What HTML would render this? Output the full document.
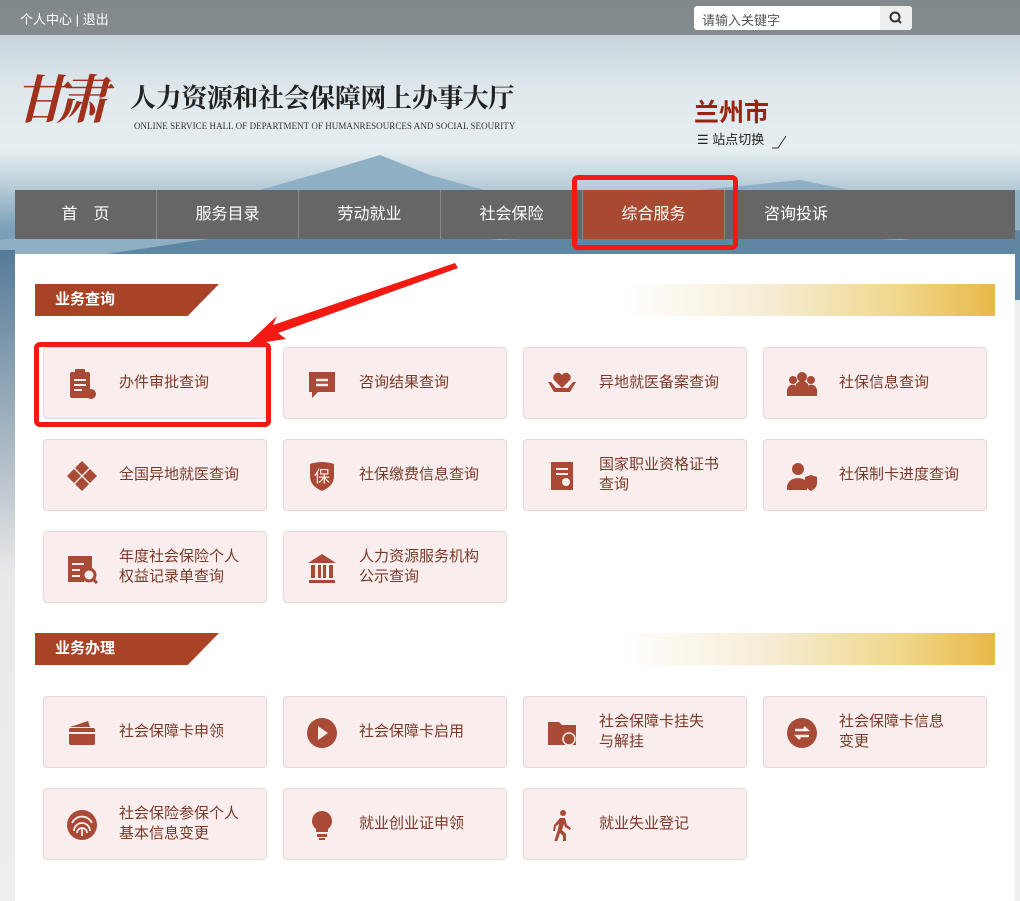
<!DOCTYPE html>
<html><head><meta charset="utf-8"><style>
*{margin:0;padding:0;box-sizing:border-box}
body{width:1020px;height:901px;overflow:hidden;position:relative;font-family:"Liberation Sans","Noto Sans CJK SC",sans-serif;background:#eee}
.hdr{position:absolute;left:0;top:0;width:1020px;height:300px;background:linear-gradient(180deg,#b9c9d2 0%,#dfe8ec 30%,#e6eef1 50%,#b8cdd8 62%,#7fa3bb 75%,#5f89a6 100%)}
.mtn{position:absolute;left:0;top:130px;width:1020px;height:170px}
.top{position:absolute;left:0;top:0;width:1020px;height:35px;background:rgba(110,115,118,.75)}
.top span{position:absolute;left:20px;top:9px;color:#fff;font-size:13px}
.search{position:absolute;left:694px;top:6px;width:218px;height:24px;background:#fff;border-radius:3px}
.search span{position:absolute;left:8px;top:4px;font-size:13px;color:#555}
.search i{position:absolute;right:0;top:0;width:32px;height:24px;background:#eee;border-radius:0 3px 3px 0}
.logo{position:absolute;left:14px;top:58px;font-family:"Noto Serif CJK SC",serif;font-size:52px;color:#a0311d;font-style:italic;font-weight:bold;letter-spacing:-10px}
.title{position:absolute;left:130px;top:78px;font-family:"Noto Serif CJK SC",serif;font-size:26px;color:#222;font-weight:bold;letter-spacing:-0.4px}
.sub{position:absolute;left:134px;top:121px;font-family:"Liberation Serif",serif;font-size:9px;color:#333;letter-spacing:.05px}
.city{position:absolute;left:694px;top:93px;font-size:25px;font-weight:bold;color:#9a2413}
.sw{position:absolute;left:697px;top:129px;font-size:13px;color:#222}
.nav{position:absolute;left:15px;top:190px;width:1000px;height:49px;background:#666;display:flex}
.nav div{width:142px;height:49px;line-height:49px;text-align:center;color:#fff;font-size:16px;border-right:1px solid #888}
.nav div.a{background:#a84a31}
.nav div.n{border:none}
.panel{position:absolute;left:15px;top:254px;width:1000px;height:647px;background:#fff}
.city-img{position:absolute;left:0;top:250px;width:15px;height:651px;background:linear-gradient(180deg,#557a98,#aab8c4 30%,#e9e9e9 50%,#eee)}
.sec{position:absolute;left:35px;height:32px;width:184px;background:#a84326;clip-path:polygon(0 0,100% 0,83% 100%,0 100%);color:#fff;font-weight:bold;font-size:15px;line-height:32px;padding-left:20px}
.gold{position:absolute;left:620px;width:375px;height:32px;background:linear-gradient(90deg,#fff 0%,#f6ecd4 40%,#f0d78a 75%,#e7b84a 100%)}
.card{position:absolute;width:224px;height:72px;background:#f9eeed;border:1px solid #e6d6d4;border-radius:4px;color:#7a3a2a;font-size:15px;line-height:20px}
.card .ic{position:absolute;left:22px;top:20px;width:32px;height:32px}
.card .t{position:absolute;left:75px;top:50%;transform:translateY(-50%);white-space:nowrap}
.ic{fill:#a84a35}
.rb{position:absolute;border:5px solid #f21a12;border-radius:6px}
</style></head><body>
<div class="hdr">
<svg class="mtn" viewBox="0 0 1020 170" preserveAspectRatio="none"><path d="M0 110 L150 90 L260 60 L330 40 L380 25 L430 45 L520 70 L620 80 L700 60 L800 50 L900 70 L1020 60 L1020 170 L0 170Z" fill="#8fb0c4"/><path d="M0 140 L200 110 L350 95 L500 110 L700 100 L900 110 L1020 100 L1020 170 L0 170Z" fill="#5d87a3"/></svg>
</div>
<div class="top"><span>个人中心 | 退出</span>
<div class="search"><span>请输入关键字</span><i><svg width="32" height="24"><circle cx="15" cy="11" r="4.5" fill="none" stroke="#333" stroke-width="2"/><path d="M18 14l3 3" stroke="#333" stroke-width="2"/></svg></i></div></div>
<div class="logo">甘肃</div>
<div class="title">人力资源和社会保障网上办事大厅</div>
<div class="sub">ONLINE SERVICE HALL OF DEPARTMENT OF HUMANRESOURCES AND SOCIAL SEOURITY</div>
<div class="city">兰州市</div>
<div class="sw">☰ 站点切换 <svg width="20" height="16" style="vertical-align:middle"><path d="M4 15h6l8-12" stroke="#333" fill="none"/></svg></div>
<div class="nav"><div>首　页</div><div>服务目录</div><div>劳动就业</div><div>社会保险</div><div class="a">综合服务</div><div class="n">咨询投诉</div></div>
<div class="city-img"></div>
<div class="panel"></div>
<div class="gold" style="top:284px"></div><div class="sec" style="top:284px">业务查询</div>
<div class="gold" style="top:633px"></div><div class="sec" style="top:633px">业务办理</div>

<div class="card" style="left:43px;top:347px"><svg class="ic" viewBox="0 0 32 32"><rect x="4" y="4" width="20" height="26" rx="2"/><rect x="9" y="1" width="10" height="5" rx="1"/><path d="M8 12h12M8 17h12M8 22h8" stroke="#f9eeed" stroke-width="2"/><circle cx="25" cy="26" r="5"/></svg><div class="t">办件审批查询</div></div>
<div class="card" style="left:283px;top:347px"><svg class="ic" viewBox="0 0 32 32"><path d="M3 4h26v20H12l-6 6v-6H3z"/><path d="M10 12h12M10 17h12" stroke="#f9eeed" stroke-width="2.5"/></svg><div class="t">咨询结果查询</div></div>
<div class="card" style="left:523px;top:347px"><svg class="ic" viewBox="0 0 32 32"><path d="M16 20 L8 12 A4 4 0 0 1 16 7 A4 4 0 0 1 24 12Z"/><path d="M2 14l6 10h16l6-10-3 0-5 6H10l-5-6z"/></svg><div class="t">异地就医备案查询</div></div>
<div class="card" style="left:763px;top:347px"><svg class="ic" viewBox="0 0 32 32"><circle cx="16" cy="9" r="5"/><circle cx="7" cy="12" r="4"/><circle cx="25" cy="12" r="4"/><path d="M9 28v-8a7 7 0 0 1 14 0v8zM1 28v-6a6 6 0 0 1 8-5v11zM31 28v-6a6 6 0 0 0-8-5v11z"/></svg><div class="t">社保信息查询</div></div>

<div class="card" style="left:43px;top:439px"><svg class="ic" viewBox="0 0 32 32"><path d="M16 1l7 7-7 7-7-7zM16 17l7 7-7 7-7-7zM1 16l7-7 7 7-7 7zM17 16l7-7 7 7-7 7z"/></svg><div class="t">全国异地就医查询</div></div>
<div class="card" style="left:283px;top:439px"><svg class="ic" viewBox="0 0 32 32"><path d="M4 4q12-4 24 0v12q0 10-12 15Q4 26 4 16z"/><text x="16" y="22" font-size="16" fill="#f9eeed" text-anchor="middle" font-family="Noto Sans CJK SC">保</text></svg><div class="t">社保缴费信息查询</div></div>
<div class="card" style="left:523px;top:439px"><svg class="ic" viewBox="0 0 32 32"><path d="M5 2h22v28H5z"/><path d="M10 9h12M10 14h12" stroke="#f9eeed" stroke-width="2"/><circle cx="20" cy="22" r="4" fill="#f9eeed"/></svg><div class="t">国家职业资格证书<br>查询</div></div>
<div class="card" style="left:763px;top:439px"><svg class="ic" viewBox="0 0 32 32"><circle cx="12" cy="9" r="6"/><path d="M1 30v-4a11 9 0 0 1 20-4v8z"/><path d="M19 17l6-2 6 2v6q0 5-6 8-6-3-6-8z"/></svg><div class="t">社保制卡进度查询</div></div>

<div class="card" style="left:43px;top:531px"><svg class="ic" viewBox="0 0 32 32"><path d="M2 4h24v14h-8v12H2z"/><path d="M6 12h12M6 18h8M6 24h8" stroke="#f9eeed" stroke-width="2"/><circle cx="23" cy="23" r="6" fill="none" stroke="#a84a35" stroke-width="3"/><path d="M27 27l4 4" stroke="#a84a35" stroke-width="3"/></svg><div class="t">年度社会保险个人<br>权益记录单查询</div></div>
<div class="card" style="left:283px;top:531px"><svg class="ic" viewBox="0 0 32 32"><path d="M16 2L2 11h28z M3 28h26v3H3z M5 13h4v13H5zM12 13h3v13h-3zM17 13h3v13h-3zM23 13h4v13h-4z"/></svg><div class="t">人力资源服务机构<br>公示查询</div></div>

<div class="card" style="left:43px;top:696px"><svg class="ic" viewBox="0 0 32 32"><path d="M4 10l18-6 2 6z"/><rect x="3" y="11" width="26" height="17" rx="2"/><path d="M3 16h26" stroke="#f9eeed" stroke-width="2"/></svg><div class="t">社会保障卡申领</div></div>
<div class="card" style="left:283px;top:696px"><svg class="ic" viewBox="0 0 32 32"><circle cx="16" cy="16" r="15"/><path d="M12 9l10 7-10 7z" fill="#f9eeed"/></svg><div class="t">社会保障卡启用</div></div>
<div class="card" style="left:523px;top:696px"><svg class="ic" viewBox="0 0 32 32"><path d="M2 5h11l3 3h14v20H2z"/><circle cx="23" cy="22" r="6" fill="#a84a35" stroke="#f9eeed" stroke-width="1.5"/></svg><div class="t">社会保障卡挂失<br>与解挂</div></div>
<div class="card" style="left:763px;top:696px"><svg class="ic" viewBox="0 0 32 32"><circle cx="16" cy="16" r="15"/><path d="M9 13h12l-3-3M23 19H11l3 3" stroke="#f9eeed" stroke-width="2.5" fill="none"/></svg><div class="t">社会保障卡信息<br>变更</div></div>

<div class="card" style="left:43px;top:788px"><svg class="ic" viewBox="0 0 32 32"><circle cx="16" cy="16" r="15"/><path d="M8 22a8 8 0 0 1 16 0M11 24a5 5 0 0 1 10 0M6 14a11 11 0 0 1 20 0M16 19v8" stroke="#f9eeed" stroke-width="1.8" fill="none"/></svg><div class="t">社会保险参保个人<br>基本信息变更</div></div>
<div class="card" style="left:283px;top:788px"><svg class="ic" viewBox="0 0 32 32"><path d="M16 2a10 10 0 0 1 6 18v3H10v-3A10 10 0 0 1 16 2z"/><rect x="11" y="25" width="10" height="3"/><rect x="13" y="29" width="6" height="2"/></svg><div class="t">就业创业证申领</div></div>
<div class="card" style="left:523px;top:788px"><svg class="ic" viewBox="0 0 32 32"><circle cx="17" cy="4" r="3"/><path d="M14 9l5 0 2 7 4 3-1 2-5-3-1-3-2 6 4 4 0 8-3 0 0-6-3-3-3 9-3 0 4-13 1-5-3 2-1 5-2 0 1-6z"/></svg><div class="t">就业失业登记</div></div>

<div class="rb" style="left:572px;top:175px;width:166px;height:75px"></div>
<div class="rb" style="left:34px;top:342px;width:237px;height:85px"></div>
<svg style="position:absolute;left:0;top:0" width="1020" height="901"><path d="M455 263 L273 325 L277 316 L246 345 L286 339 L278 333 L458 268Z" fill="#f21a12"/></svg>
</body></html>
